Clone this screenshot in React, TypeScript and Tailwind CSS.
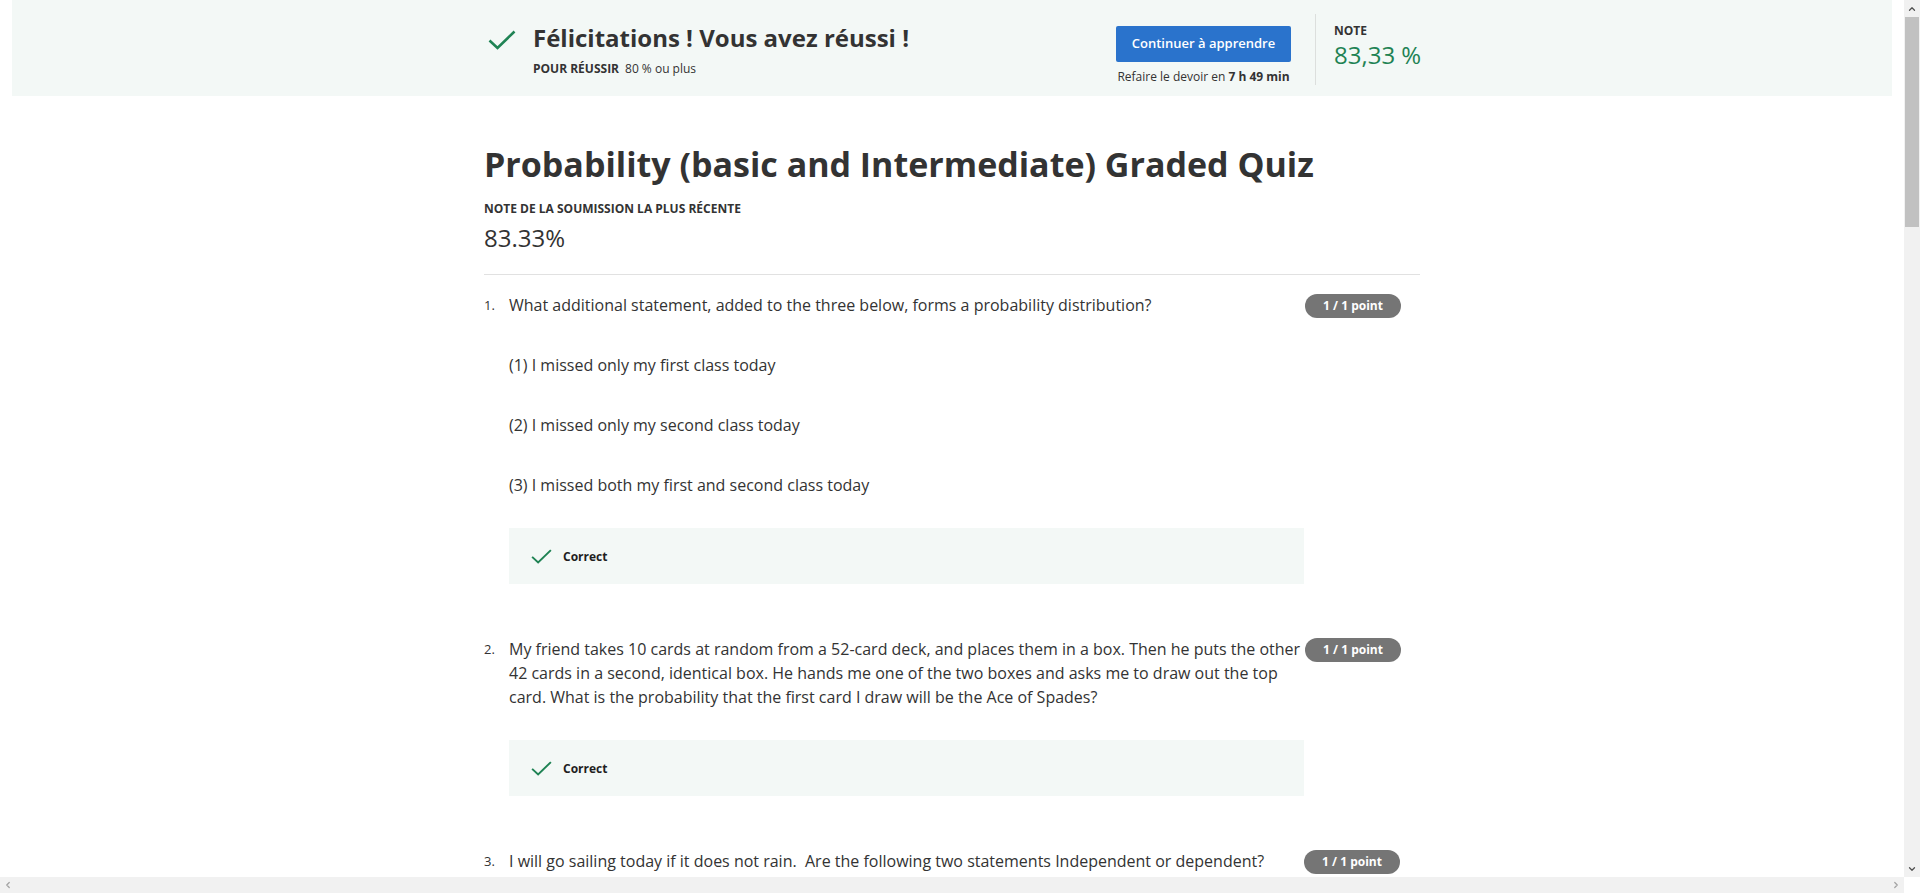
import { ChevronUp, ChevronDown, ChevronLeft, ChevronRight } from 'lucide-react';

const font = { fontFamily: '"Open Sans", "Noto Sans", Arial, sans-serif' };

function Check({ className }: { className?: string }) {
  return (
    <svg viewBox="0 0 28 20" className={className} fill="none">
      <path d="M1.5 10.5 L9.5 18 L26.5 1.5" stroke="#1f8354" strokeWidth="2.6" />
    </svg>
  );
}

function PointBadge() {
  return (
    <span className="flex h-[24px] w-[96px] shrink-0 items-center justify-center rounded-full bg-[#757575] text-[12px] font-bold text-white">
      1 / 1 point
    </span>
  );
}

function CorrectBox() {
  return (
    <div className="flex h-[56px] w-[795px] items-center bg-[#f3f8f6] pl-[22px]">
      <Check className="mt-[1px] h-[15px] w-[21px]" />
      <span className="ml-[11px] mt-[2px] text-[12px] font-bold text-[#1f1f1f]">Correct</span>
    </div>
  );
}

interface QuestionProps {
  num: number;
  text: string;
  children?: React.ReactNode;
}

function Question({ num, text, children }: QuestionProps) {
  return (
    <div className="flex pr-[20px]">
      <span className="w-[25px] shrink-0 pt-[2px] text-[13px] leading-[20px] text-[#333]">{num}.</span>
      <div className="w-[795px]">
        <p className="whitespace-pre-wrap text-[16px] leading-[24px] text-[#333]">{text}</p>
        {children}
      </div>
      <div className="ml-[1px] pt-[1px]">
        <PointBadge />
      </div>
    </div>
  );
}

export default function App() {
  return (
    <div className="flex h-[893px] w-[1920px] flex-col overflow-hidden bg-white" style={font}>
      <div className="flex min-h-0 flex-1">
        {/* page */}
        <div className="min-w-0 flex-1 overflow-hidden px-[12px]">
          {/* Result banner */}
          <div className="h-[96px] bg-[#f3f8f6]">
            <div className="mx-auto flex w-[936px] py-[14px]">
              <div className="flex flex-1 pl-[4px] pt-[8px]">
                <Check className="mt-[8px] h-[20px] w-[28px]" />
                <div className="ml-[17px]">
                  <h2 className="text-[24px] font-bold leading-[32px] text-[#333]">
                    Félicitations ! Vous avez réussi !
                  </h2>
                  <p className="mt-[7px] text-[12px] leading-[16px] text-[#333]">
                    <span className="font-bold">POUR RÉUSSIR</span>
                    <span className="ml-[6px]">80 % ou plus</span>
                  </p>
                </div>
              </div>
              <div className="flex flex-col items-center pt-[12px]">
                <button className="h-[36px] w-[175px] rounded-[2px] bg-[#2a73cc] text-[13px] font-semibold text-white">
                  Continuer à apprendre
                </button>
                <p className="mt-[7px] text-[12px] leading-[16px] text-[#333]">
                  Refaire le devoir en <span className="font-bold">7 h 49 min</span>
                </p>
              </div>
              <div className="ml-[24px] w-px self-stretch bg-[#dcdfdd]" />
              <div className="ml-[18px] w-[86px] whitespace-nowrap pt-[9px]">
                <p className="text-[12px] font-bold leading-[16px] text-[#333]">NOTE</p>
                <p className="text-[24px] leading-[32px] text-[#1f8354]">83,33 %</p>
              </div>
            </div>
          </div>

          {/* Quiz content */}
          <div className="mx-auto w-[936px] pt-[45px]">
            <h1 className="text-[34px] font-bold leading-[46px] text-[#333]">
              Probability (basic and Intermediate) Graded Quiz
            </h1>
            <p className="mt-[14px] text-[12px] font-bold leading-[16px] text-[#333]">
              NOTE DE LA SOUMISSION LA PLUS RÉCENTE
            </p>
            <p className="mt-[5px] text-[24px] leading-[32px] text-[#333]">83.33%</p>
            <div className="mt-[20px] h-px bg-[#e1e1e1]" />

            <div className="mt-[18px]">
              <Question num={1} text="What additional statement, added to the three below, forms a probability distribution?">
                <p className="mt-[36px] text-[16px] leading-[24px] text-[#333]">(1) I missed only my first class today</p>
                <p className="mt-[36px] text-[16px] leading-[24px] text-[#333]">(2) I missed only my second class today</p>
                <p className="mt-[36px] text-[16px] leading-[24px] text-[#333]">(3) I missed both my first and second class today</p>
                <div className="mt-[31px]">
                  <CorrectBox />
                </div>
              </Question>
            </div>

            <div className="mt-[53px]">
              <Question
                num={2}
                text="My friend takes 10 cards at random from a 52-card deck, and places them in a box. Then he puts the other 42 cards in a second, identical box. He hands me one of the two boxes and asks me to draw out the top card. What is the probability that the first card I draw will be the Ace of Spades?"
              >
                <div className="mt-[31px]">
                  <CorrectBox />
                </div>
              </Question>
            </div>

            <div className="mt-[53px]">
              <Question
                num={3}
                text="I will go sailing today if it does not rain.  Are the following two statements Independent or dependent?"
              />
            </div>
          </div>
        </div>

        {/* vertical scrollbar */}
        <div className="flex w-[16px] shrink-0 flex-col bg-[#f1f1f1]">
          <div className="flex h-[17px] items-center justify-center">
            <ChevronUp className="h-[10px] w-[10px] text-[#505050]" strokeWidth={3} />
          </div>
          <div className="mx-[1px] h-[210px] bg-[#c1c1c1]" />
          <div className="flex-1" />
          <div className="flex h-[17px] items-center justify-center">
            <ChevronDown className="h-[10px] w-[10px] text-[#505050]" strokeWidth={3} />
          </div>
        </div>
      </div>

      {/* horizontal scrollbar */}
      <div className="flex h-[16px] shrink-0">
        <div className="flex flex-1 items-center justify-between bg-[#f1f1f1] px-[3px]">
          <ChevronLeft className="h-[10px] w-[10px] text-[#a3a3a3]" strokeWidth={3} />
          <ChevronRight className="h-[10px] w-[10px] text-[#a3a3a3]" strokeWidth={3} />
        </div>
        <div className="w-[16px] bg-white" />
      </div>
    </div>
  );
}
